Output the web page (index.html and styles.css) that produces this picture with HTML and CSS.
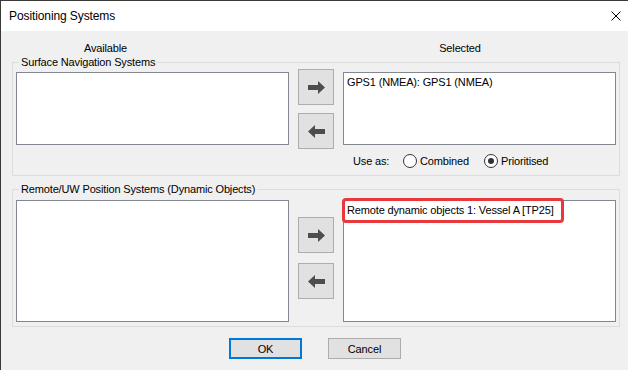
FILE: index.html
```html
<!DOCTYPE html>
<html>
<head>
<meta charset="utf-8">
<link rel="stylesheet" href="styles.css">
</head>
<body>
<div class="window">
  <div class="titlebar">
    <span class="title">Positioning Systems</span>
    <svg class="close" width="10" height="10" viewBox="0 0 10 10"><path d="M0.5 0.5 L9.5 9.5 M9.5 0.5 L0.5 9.5" stroke="#000" stroke-width="1" fill="none"/></svg>
  </div>
  <div class="body">
    <div class="headers">
      <span class="hdr hdr-avail">Available</span>
      <span class="hdr hdr-sel">Selected</span>
    </div>

    <div class="group group-surface">
      <div class="legend">Surface Navigation Systems</div>
      <div class="cols">
        <div class="list list-surface"></div>
        <div class="btns btns-surface">
          <div class="abtn"><svg width="17" height="13" viewBox="0 0 17 13"><path d="M0 4 H10 V0 L17 6.5 L10 13 V9 H0 Z" fill="#4d4d4d"/></svg></div>
          <div class="abtn"><svg width="17" height="13" viewBox="0 0 17 13"><path d="M17 4 H7 V0 L0 6.5 L7 13 V9 H17 Z" fill="#4d4d4d"/></svg></div>
        </div>
        <div class="rightcol">
          <div class="list list-surface"><div class="item">GPS1 (NMEA): GPS1 (NMEA)</div></div>
          <div class="useas">
            <span class="useas-label">Use as:</span>
            <span class="radio radio-combined"><span class="circle"></span><span>Combined</span></span>
            <span class="radio"><span class="circle checked"></span><span>Prioritised</span></span>
          </div>
        </div>
      </div>
    </div>

    <div class="group group-remote">
      <div class="legend">Remote/UW Position Systems (Dynamic Objects)</div>
      <div class="cols">
        <div class="list list-remote"></div>
        <div class="btns btns-remote">
          <div class="abtn"><svg width="17" height="13" viewBox="0 0 17 13"><path d="M0 4 H10 V0 L17 6.5 L10 13 V9 H0 Z" fill="#4d4d4d"/></svg></div>
          <div class="abtn"><svg width="17" height="13" viewBox="0 0 17 13"><path d="M17 4 H7 V0 L0 6.5 L7 13 V9 H17 Z" fill="#4d4d4d"/></svg></div>
        </div>
        <div class="list list-remote"><div class="item item-flagged">Remote dynamic objects 1: Vessel A [TP25]</div></div>
      </div>
    </div>

    <div class="footer">
      <div class="btn btn-ok">OK</div>
      <div class="btn">Cancel</div>
    </div>
  </div>
</div>
</body>
</html>
```

FILE: styles.css
```css
* { box-sizing: border-box; }
html, body { margin: 0; padding: 0; }
body {
  width: 628px;
  height: 370px;
  overflow: hidden;
  background: #f0f0f0;
  font-family: "Liberation Sans", Arial, sans-serif;
  font-size: 11px;
  letter-spacing: -0.15px;
  color: #000;
}
.window {
  width: 628px;
  height: 370px;
  border-top: 1px solid #3a3a3a;
  border-left: 1px solid #3a3a3a;
  background: #f0f0f0;
}
.titlebar {
  height: 30px;
  background: #fff;
  display: flex;
  align-items: center;
  justify-content: space-between;
  padding: 0 7px 0 8px;
}
.title {
  font-size: 12px;
  letter-spacing: -0.1px;
}
.close { display: block; }
.body {
  padding: 0 8px 0 11px;
}
.headers {
  margin-top: 11px;
  height: 13px;
  line-height: 13px;
  display: flex;
}
.hdr { text-align: center; }
.hdr-avail { width: 187px; }
.hdr-sel { width: 320px; margin-left: 101px; }

.group {
  width: 608px;
  border: 1px solid #dcdcdc;
}
.group-surface {
  margin-top: 7px;
  padding: 0 3px 6px 3px;
}
.group-remote {
  margin-top: 13px;
  padding: 0 3px 4px 3px;
}
.legend {
  width: fit-content;
  margin: -7px 0 0 3px;
  padding: 0 2px;
  line-height: 13px;
  height: 13px;
  background: #f0f0f0;
}
.cols {
  display: grid;
  grid-template-columns: 273px 36px 273px;
  column-gap: 9px;
  align-items: start;
}
.group-remote .cols { margin-top: 4px; }
.list {
  background: #fff;
  border: 1px solid #828790;
  padding: 3px;
}
.list-surface { height: 73px; margin-top: 3px; }
.list-remote { height: 122px; }
.item {
  line-height: 13px;
  white-space: nowrap;
}
.item-flagged {
  display: inline-block;
  margin: -4px 0 0 -2px;
  padding: 0 7px 0 2px;
  line-height: 19px;
  height: 19px;
  background: #fff;
  outline: 3px solid #e8383b;
  border-radius: 1px;
}
.btns {
  display: flex;
  flex-direction: column;
}
.btns-surface { gap: 8px; }
.btns-remote { gap: 10px; margin-top: 17px; }
.abtn {
  width: 36px;
  height: 36px;
  background: #e1e1e1;
  border: 1px solid #adadad;
  display: flex;
  align-items: center;
  justify-content: center;
}
.abtn svg { display: block; }
.useas {
  margin-top: 8px;
  height: 16px;
  display: flex;
  align-items: center;
  padding-left: 10px;
}
.useas-label { width: 50px; }
.radio {
  display: inline-flex;
  align-items: center;
  gap: 3px;
}
.radio-combined { width: 81px; }
.circle {
  width: 14px;
  height: 14px;
  border: 1px solid #333;
  border-radius: 50%;
  background: #fff;
  display: flex;
  align-items: center;
  justify-content: center;
}
.circle.checked::after {
  content: "";
  width: 6px;
  height: 6px;
  border-radius: 50%;
  background: #333;
}
.footer {
  margin-top: 11px;
  display: flex;
  gap: 26px;
  padding-left: 217px;
}
.btn {
  width: 73px;
  height: 21px;
  background: #e1e1e1;
  border: 1px solid #adadad;
  display: flex;
  align-items: center;
  justify-content: center;
}
.btn-ok {
  border: 2px solid #0078d7;
}
```
